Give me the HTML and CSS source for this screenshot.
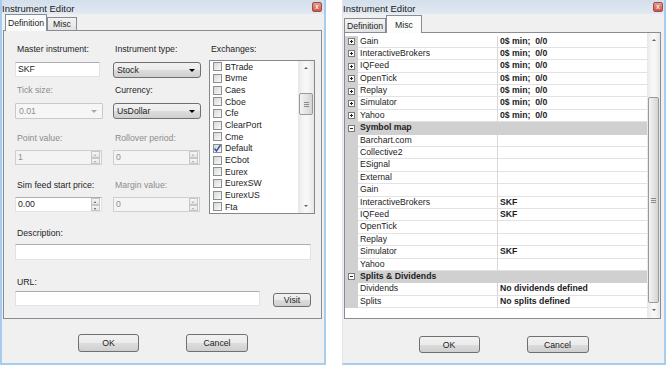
FILE: index.html
```html
<!DOCTYPE html>
<html lang="en">
<head>
  <meta charset="UTF-8">
  <meta name="viewport" content="width=device-width, initial-scale=1.0">
  <title>Instrument Editor</title>
  <link rel="stylesheet" href="styles.css">
</head>
<body>
  <div class="desktop">

    <!-- Definition tab -->
    <div class="window win-def">
      <div class="titlebar">
        <span class="title">Instrument Editor</span>
        <span class="close">x</span>
      </div>
      <div class="tabstrip">
        <div class="tab active tab-def">Definition</div>
        <div class="tab tab-misc">Misc</div>
      </div>
      <div class="tabpage form-page">
        <div class="form">
          <div class="lbl">Master instrument:</div>
          <div class="lbl">Instrument type:</div>
          <div class="lbl">Exchanges:</div>

          <div class="textbox master">SKF</div>
          <div class="combo">Stock<span class="arrow"></span></div>

          <div class="checklist">
            <div class="items">
              <div class="item"><span class="chk"></span>BTrade</div>
              <div class="item"><span class="chk"></span>Bvme</div>
              <div class="item"><span class="chk"></span>Caes</div>
              <div class="item"><span class="chk"></span>Cboe</div>
              <div class="item"><span class="chk"></span>Cfe</div>
              <div class="item"><span class="chk"></span>ClearPort</div>
              <div class="item"><span class="chk"></span>Cme</div>
              <div class="item"><span class="chk checked"><svg width="9" height="9" viewBox="0 0 9 9"><path d="M1.5 4.5 L3.5 7 L7.5 1" fill="none" stroke="#2d55a8" stroke-width="1.4"/></svg></span>Default</div>
              <div class="item"><span class="chk"></span>ECbot</div>
              <div class="item"><span class="chk"></span>Eurex</div>
              <div class="item"><span class="chk"></span>EurexSW</div>
              <div class="item"><span class="chk"></span>EurexUS</div>
              <div class="item"><span class="chk"></span>Fta</div>
            </div>
            <div class="vscroll list-scroll">
              <span class="sarrow up"></span>
              <span class="track"><span class="thumb"><span class="grip"></span></span></span>
              <span class="sarrow down"></span>
            </div>
          </div>

          <div class="lbl off">Tick size:</div>
          <div class="lbl">Currency:</div>
          <div class="combo off">0.01<span class="arrow"></span></div>
          <div class="combo">UsDollar<span class="arrow"></span></div>

          <div class="lbl off">Point value:</div>
          <div class="lbl off">Rollover period:</div>
          <div class="spinner off">1<span class="spin"><i class="up"></i><i class="down"></i></span></div>
          <div class="spinner off">0<span class="spin"><i class="up"></i><i class="down"></i></span></div>

          <div class="lbl">Sim feed start price:</div>
          <div class="lbl off">Margin value:</div>
          <div class="spinner">0.00<span class="spin"><i class="up"></i><i class="down"></i></span></div>
          <div class="spinner off">0<span class="spin"><i class="up"></i><i class="down"></i></span></div>
        </div>

        <div class="lbl desc-lbl">Description:</div>
        <div class="textbox desc"></div>
        <div class="lbl url-lbl">URL:</div>
        <div class="url-row">
          <div class="textbox url"></div>
          <button class="btn visit">Visit</button>
        </div>
      </div>
      <div class="actions">
        <button class="btn ok">OK</button>
        <button class="btn cancel">Cancel</button>
      </div>
    </div>

    <!-- Misc tab -->
    <div class="window win-misc">
      <div class="titlebar">
        <span class="title">Instrument Editor</span>
        <span class="close">x</span>
      </div>
      <div class="tabstrip">
        <div class="tab tab-def">Definition</div>
        <div class="tab active tab-misc">Misc</div>
      </div>
      <div class="tabpage grid-page">
        <div class="propgrid">
          <div class="rows">
            <div class="prow"><span class="gutter"><span class="exp plus"></span></span><span class="pname">Gain</span><span class="pval">0$ min;&nbsp; 0/0</span></div>
            <div class="prow"><span class="gutter"><span class="exp plus"></span></span><span class="pname">InteractiveBrokers</span><span class="pval">0$ min;&nbsp; 0/0</span></div>
            <div class="prow"><span class="gutter"><span class="exp plus"></span></span><span class="pname">IQFeed</span><span class="pval">0$ min;&nbsp; 0/0</span></div>
            <div class="prow"><span class="gutter"><span class="exp plus"></span></span><span class="pname">OpenTick</span><span class="pval">0$ min;&nbsp; 0/0</span></div>
            <div class="prow"><span class="gutter"><span class="exp plus"></span></span><span class="pname">Replay</span><span class="pval">0$ min;&nbsp; 0/0</span></div>
            <div class="prow"><span class="gutter"><span class="exp plus"></span></span><span class="pname">Simulator</span><span class="pval">0$ min;&nbsp; 0/0</span></div>
            <div class="prow"><span class="gutter"><span class="exp plus"></span></span><span class="pname">Yahoo</span><span class="pval">0$ min;&nbsp; 0/0</span></div>

            <div class="prow cat"><span class="gutter"><span class="exp"></span></span><span class="cname">Symbol map</span></div>
            <div class="prow"><span class="gutter"></span><span class="pname">Barchart.com</span><span class="pval"></span></div>
            <div class="prow"><span class="gutter"></span><span class="pname">Collective2</span><span class="pval"></span></div>
            <div class="prow"><span class="gutter"></span><span class="pname">ESignal</span><span class="pval"></span></div>
            <div class="prow"><span class="gutter"></span><span class="pname">External</span><span class="pval"></span></div>
            <div class="prow"><span class="gutter"></span><span class="pname">Gain</span><span class="pval"></span></div>
            <div class="prow"><span class="gutter"></span><span class="pname">InteractiveBrokers</span><span class="pval">SKF</span></div>
            <div class="prow"><span class="gutter"></span><span class="pname">IQFeed</span><span class="pval">SKF</span></div>
            <div class="prow"><span class="gutter"></span><span class="pname">OpenTick</span><span class="pval"></span></div>
            <div class="prow"><span class="gutter"></span><span class="pname">Replay</span><span class="pval"></span></div>
            <div class="prow"><span class="gutter"></span><span class="pname">Simulator</span><span class="pval">SKF</span></div>
            <div class="prow"><span class="gutter"></span><span class="pname">Yahoo</span><span class="pval"></span></div>

            <div class="prow cat"><span class="gutter"><span class="exp"></span></span><span class="cname">Splits &amp; Dividends</span></div>
            <div class="prow"><span class="gutter"></span><span class="pname">Dividends</span><span class="pval">No dividends defined</span></div>
            <div class="prow"><span class="gutter"></span><span class="pname">Splits</span><span class="pval">No splits defined</span></div>
          </div>
          <div class="vscroll grid-scroll">
            <span class="sarrow up"></span>
            <span class="track"><span class="thumb"><span class="grip"></span></span></span>
            <span class="sarrow down"></span>
          </div>
        </div>
      </div>
      <div class="actions">
        <button class="btn ok">OK</button>
        <button class="btn cancel">Cancel</button>
      </div>
    </div>

  </div>
</body>
</html>
```

FILE: styles.css
```css
* {
  box-sizing: border-box;
}

body {
  margin: 0;
  background: #fff;
  font-family: 'Liberation Sans', Arial, sans-serif;
  font-size: 8.7px;
  color: #1c1c1c;
}

.desktop {
  display: flex;
  gap: 16px;
}

/* Window frame */
.window {
  height: 365px;
  background: #f0f0f0;
  border: 2px solid #a6cdee;
  border-top: 0;
  display: flex;
  flex-direction: column;
}

.win-def {
  width: 326px;
}

.win-misc {
  width: 324px;
  border-left: 1px solid #dde5ee;
}

.titlebar {
  height: 14px;
  flex: none;
  display: flex;
  justify-content: space-between;
  align-items: center;
  background: linear-gradient(#d3dfec, #e2e9f2);
}

.title {
  font-size: 9.5px;
  color: #1a1a1a;
  padding-top: 2px;
}

.close {
  width: 10px;
  height: 10px;
  margin-right: 2px;
  border: 1px solid #a24c44;
  border-radius: 2px;
  background: linear-gradient(#e79b90, #c9564b);
  color: #fbe3df;
  font-size: 7px;
  font-weight: bold;
  line-height: 8px;
  text-align: center;
}

.win-misc .close {
  margin-right: 1px;
}

/* Tabs */
.tabstrip {
  flex: none;
  display: flex;
  align-items: flex-end;
  height: 16px;
  padding-left: 3px;
  position: relative;
  z-index: 1;
}

.win-misc .tabstrip {
  height: 18px;
  padding-left: 1px;
}

.tab {
  height: 13px;
  border: 1px solid #898c95;
  border-bottom: 0;
  background: linear-gradient(#f3f3f3, #e3e3e3);
  display: flex;
  align-items: center;
  justify-content: center;
}

.tab.active {
  height: 17px;
  margin-bottom: -1px;
  background: #fcfcfc;
}

.tab-def {
  width: 42px;
}

.tab-misc {
  width: 30px;
}

.win-misc .tab {
  height: 14px;
}

.win-misc .tab.active {
  height: 18px;
}

.win-misc .tab-misc {
  width: 36px;
}

.tabpage {
  border: 1px solid #898c95;
  background: #f0f0f0;
  flex: none;
}

.form-page {
  height: 289px;
  margin: 0 2px 0 1px;
  padding: 12px 0 0 11px;
}

.grid-page {
  height: 287px;
  margin: 0 3px 0 1px;
}

/* Definition form */
.form {
  display: grid;
  grid-template-columns: 98px 96px 106px;
  grid-template-rows: 19px 22px 19px 29px 18px 29px 18px 16px;
  align-items: start;
}

.lbl {
  line-height: 12px;
  padding-left: 2px;
  color: #1e1e1e;
}

.lbl.off {
  color: #8c8c8c;
}

.textbox {
  height: 15px;
  background: #fff;
  border: 1px solid #e0e2e8;
  border-top-color: #abadb3;
  padding-left: 2px;
  line-height: 13px;
}

.textbox.master {
  width: 85px;
}

.combo {
  position: relative;
  width: 88px;
  height: 16px;
  border: 1px solid #707070;
  border-radius: 3px;
  background: linear-gradient(#f2f2f2 0%, #ebebeb 50%, #dddddd 50%, #cfcfcf 100%);
  padding-left: 3px;
  line-height: 14px;
}

.combo .arrow {
  position: absolute;
  right: 5px;
  top: 6px;
  border-left: 3px solid transparent;
  border-right: 3px solid transparent;
  border-top: 3px solid #000;
}

.combo.off {
  border-color: #c9c9c9;
  border-radius: 1px;
  background: #f6f6f6;
  color: #8f8f8f;
}

.combo.off .arrow {
  border-top-color: #a8a8a8;
}

.spinner {
  position: relative;
  width: 87px;
  height: 15px;
  background: #fff;
  border: 1px solid #e0e2e8;
  border-top-color: #abadb3;
  padding-left: 2px;
  line-height: 13px;
}

.spinner.off {
  background: #f4f4f4;
  border-color: #cfcfcf;
  color: #8f8f8f;
}

.spin {
  position: absolute;
  right: 1px;
  top: 0;
  bottom: 0;
  width: 9px;
  display: flex;
  flex-direction: column;
}

.spin i {
  flex: 1;
  border: 1px solid #c6c6c6;
  background: linear-gradient(#f6f6f6, #e4e4e4);
  position: relative;
}

.spin i::after {
  content: "";
  position: absolute;
  left: 2px;
  top: 2px;
  border-left: 1.5px solid transparent;
  border-right: 1.5px solid transparent;
}

.spin .up::after {
  border-bottom: 2px solid #555;
}

.spin .down::after {
  border-top: 2px solid #555;
}

.spinner.off .spin i::after {
  border-top-color: #aaa;
  border-bottom-color: #aaa;
}

/* Exchanges list */
.checklist {
  grid-column: 3;
  grid-row: 2 / span 7;
  margin-top: -2px;
  width: 106px;
  height: 154px;
  border: 1px solid #828790;
  background: #fff;
  display: flex;
}

.items {
  flex: 1;
}

.item {
  height: 11.67px;
  display: flex;
  align-items: center;
  padding-left: 3px;
}

.chk {
  width: 9px;
  height: 9px;
  margin-right: 3px;
  border: 1px solid #8e8f8f;
  background: linear-gradient(135deg, #d8d8d8, #fafafa);
  display: flex;
}

.chk svg {
  margin: -1px;
}

/* Scrollbars */
.vscroll {
  flex: none;
  display: flex;
  flex-direction: column;
  background: linear-gradient(90deg, #e8e8e8, #f7f7f7 40%, #f7f7f7 60%, #e8e8e8);
}

.list-scroll {
  width: 16px;
}

.grid-scroll {
  width: 13px;
}

.sarrow {
  height: 14px;
  flex: none;
  position: relative;
}

.sarrow::after {
  content: "";
  position: absolute;
  left: 50%;
  top: 6px;
  margin-left: -2px;
  border-left: 2px solid transparent;
  border-right: 2px solid transparent;
}

.sarrow.up::after {
  border-bottom: 2px solid #606060;
}

.sarrow.down::after {
  border-top: 2px solid #606060;
}

.track {
  flex: 1;
  padding: 0 1px;
}

.thumb {
  display: flex;
  align-items: center;
  justify-content: center;
  border: 1px solid #9a9a9a;
  border-radius: 2px;
  background: linear-gradient(90deg, #f4f4f4, #e4e4e4 50%, #d4d4d4);
}

.list-scroll .thumb {
  margin-top: 18px;
  height: 22px;
}

.grid-scroll .sarrow {
  height: 15px;
}

.grid-scroll .thumb {
  margin-top: 49px;
  height: 206px;
}

.grip {
  width: 5px;
  height: 5px;
  border-top: 1px solid #8a8a8a;
  border-bottom: 1px solid #8a8a8a;
  position: relative;
}

.grip::after {
  content: "";
  position: absolute;
  left: 0;
  right: 0;
  top: 1px;
  border-top: 1px solid #8a8a8a;
}

/* Description / URL */
.desc-lbl {
  margin-top: 14px;
}

.textbox.desc {
  width: 296px;
  height: 16px;
  margin-top: 5px;
}

.url-lbl {
  margin-top: 16px;
}

.url-row {
  display: flex;
  align-items: flex-start;
  margin-top: 3px;
}

.textbox.url {
  width: 245px;
}

/* Buttons */
.btn {
  font-family: inherit;
  font-size: 8.7px;
  color: #1c1c1c;
  border: 1px solid #707070;
  border-radius: 3px;
  background: linear-gradient(#f2f2f2 0%, #ebebeb 50%, #dddddd 50%, #cfcfcf 100%);
  padding: 0;
}

.btn.visit {
  width: 38px;
  height: 14px;
  margin: 2px 0 0 13px;
}

.actions {
  display: flex;
  justify-content: center;
  gap: 47px;
  margin-top: 15px;
}

.win-misc .actions {
  margin-top: 17px;
}

.btn.ok {
  width: 61px;
  height: 18px;
}

.btn.cancel {
  width: 62px;
  height: 18px;
}

.win-misc .btn {
  height: 17px;
}

/* Property grid */
.propgrid {
  display: flex;
  height: 100%;
}

.rows {
  flex: 1;
  background: #fff;
  padding-top: 2.5px;
}

.prow {
  height: 12.4px;
  display: flex;
  line-height: 11.4px;
}

.gutter {
  width: 13px;
  flex: none;
  background: #d0d0d0;
  position: relative;
}

.pname {
  width: 140px;
  flex: none;
  padding-left: 2px;
  border-right: 1px solid #d8d8d8;
  border-bottom: 1px solid #e2e2e2;
}

.pval {
  flex: 1;
  padding-left: 2px;
  font-weight: bold;
  border-bottom: 1px solid #e2e2e2;
}

.prow.cat {
  background: #d0d0d0;
}

.cname {
  padding-left: 2px;
  font-weight: bold;
}

.exp {
  position: absolute;
  left: 3px;
  top: 2.5px;
  width: 7px;
  height: 7px;
  border: 1px solid #7a7a7a;
  background: #fff;
}

.exp::before {
  content: "";
  position: absolute;
  left: 1px;
  right: 1px;
  top: 2px;
  border-top: 1px solid #222;
}

.exp.plus::after {
  content: "";
  position: absolute;
  top: 1px;
  bottom: 1px;
  left: 2px;
  border-left: 1px solid #222;
}
```
